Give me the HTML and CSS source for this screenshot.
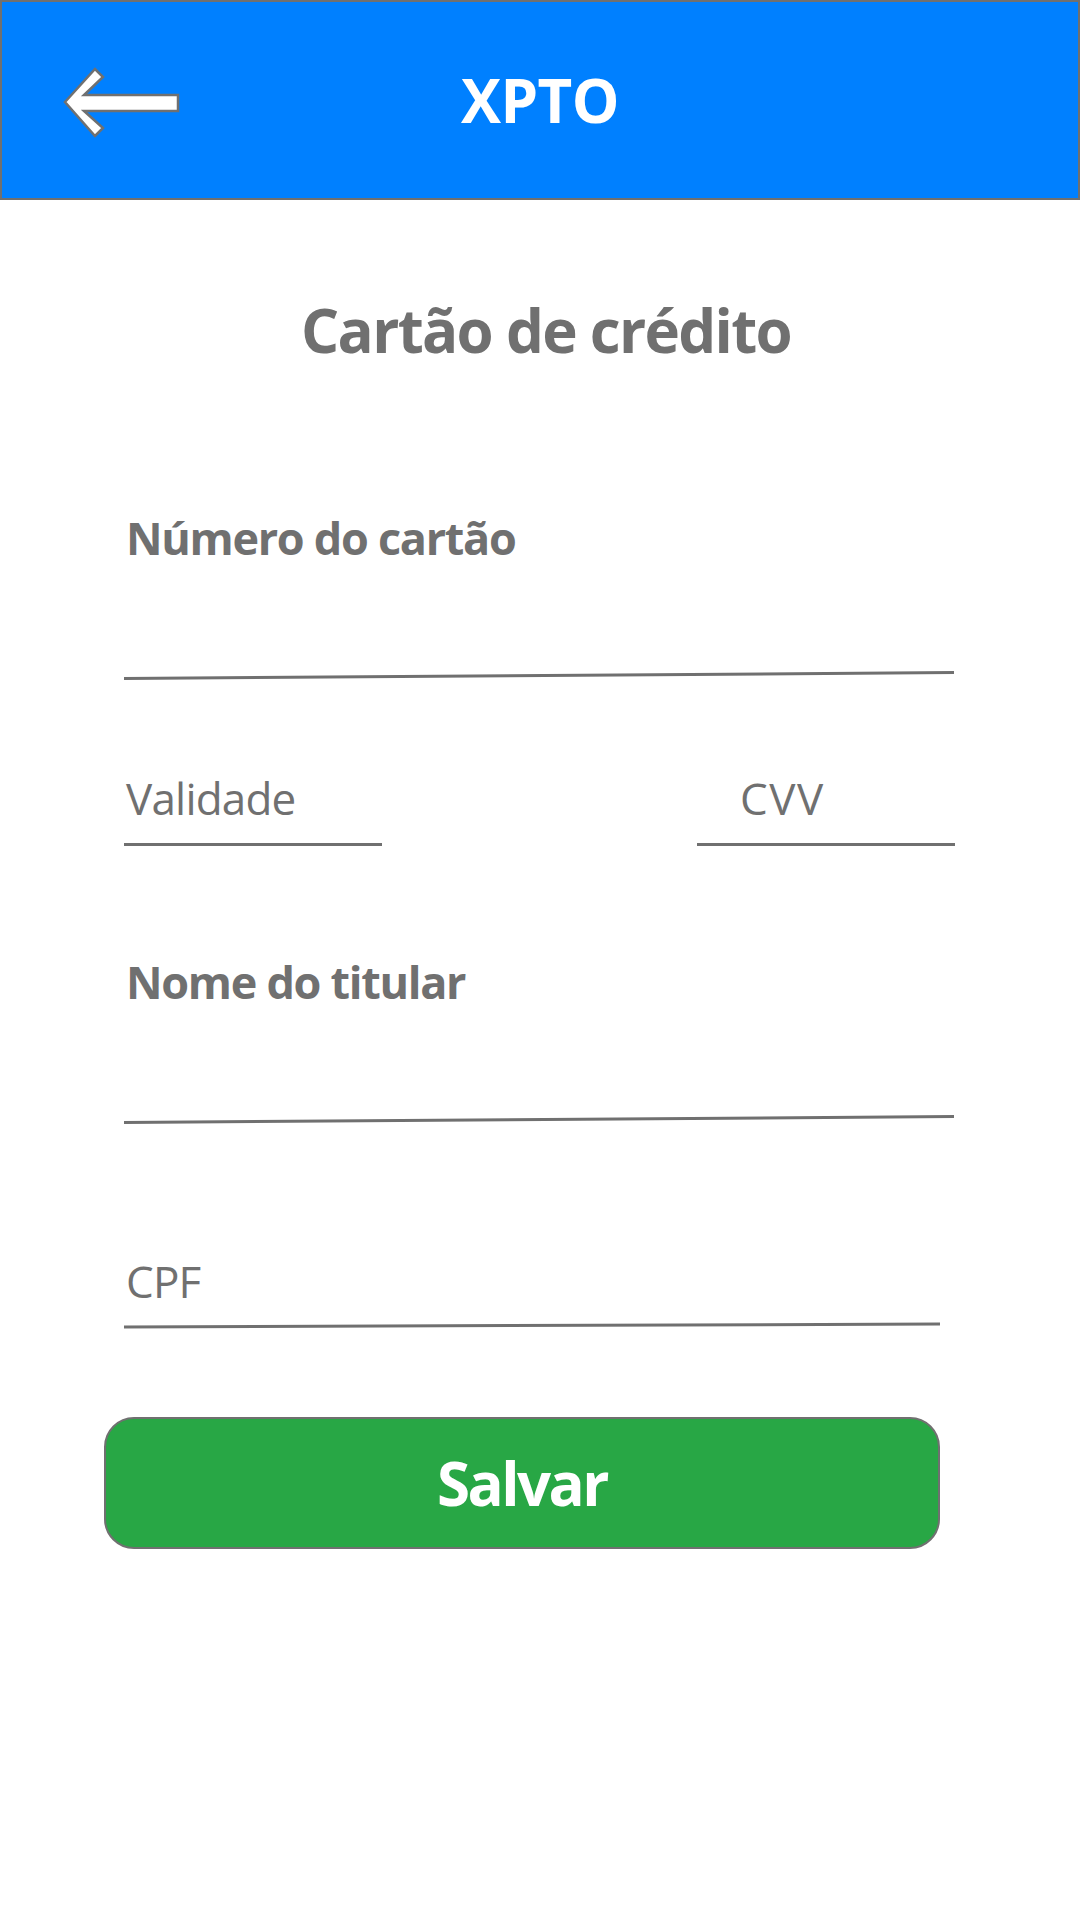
FILE: index.html
```html
<!DOCTYPE html>
<html lang="pt-BR">
<head>
<meta charset="utf-8">
<title>XPTO - Cartão de crédito</title>
<link rel="stylesheet" href="styles.css">
</head>
<body>
<header class="appbar">
  <button class="back" aria-label="Voltar">
    <svg width="120" height="80" viewBox="60 65 125 80" aria-hidden="true">
      <polygon points="65,104 95,71 103,79 84,97 178,97 178,113 84,113 103,130 95,138" fill="#ffffff" stroke="#707070" stroke-width="2.5" stroke-linejoin="miter"/>
    </svg>
  </button>
  <div class="appbar-title">XPTO</div>
</header>
<main class="form">
  <h1 class="title">Cartão de crédito</h1>
  <div class="field">
    <div class="label">Número do cartão</div>
    <div class="underline slant"></div>
  </div>
  <div class="row">
    <div class="small-field">
      <div class="placeholder">Validade</div>
      <div class="underline short"></div>
    </div>
    <div class="small-field">
      <div class="placeholder cvv">CVV</div>
      <div class="underline short"></div>
    </div>
  </div>
  <div class="field name-field">
    <div class="label">Nome do titular</div>
    <div class="underline slant"></div>
  </div>
  <div class="field cpf-field">
    <div class="placeholder">CPF</div>
    <div class="underline cpf-line"></div>
  </div>
  <button class="save">Salvar</button>
</main>
</body>
</html>
```

FILE: styles.css
```css
* { box-sizing: border-box; }
html, body { margin: 0; padding: 0; background: #ffffff; }
body {
  width: 1080px;
  height: 1920px;
  font-family: "Open Sans", "Noto Sans", "DejaVu Sans", sans-serif;
  color: #707070;
}
.appbar {
  position: relative;
  height: 200px;
  background: #0080ff;
  border: 2px solid #707070;
  display: flex;
  align-items: center;
  justify-content: center;
}
.back {
  position: absolute;
  left: 58px;
  top: 61px;
  width: 125px;
  height: 80px;
  padding: 0;
  border: 0;
  background: transparent;
}
.back svg { display: block; width: 125px; height: 80px; }
.appbar-title {
  color: #ffffff;
  font-weight: 700;
  font-size: 60px;
  line-height: 60px;
  letter-spacing: -0.5px;
}
.form {
  padding: 0 124px;
  display: flex;
  flex-direction: column;
}
.title {
  margin: 100px 0 0;
  text-align: center;
  font-weight: 700;
  font-size: 60px;
  line-height: 60px;
  letter-spacing: -1.7px;
  padding-left: 12px;
}
.field { display: flex; flex-direction: column; }
.label {
  margin-top: 155px;
  padding-left: 2px;
  font-weight: 700;
  font-size: 45px;
  line-height: 45px;
  letter-spacing: -1.3px;
}
.underline {
  height: 3px;
  background: #707070;
}
.slant {
  margin-top: 114px;
  width: 830px;
  transform: rotate(-0.41deg);
}
.row {
  display: flex;
  justify-content: space-between;
  width: 831px;
  margin-top: 99px;
}
.small-field { width: 258px; display: flex; flex-direction: column; }
.placeholder {
  padding-left: 2px;
  font-weight: 400;
  font-size: 44px;
  line-height: 44px;
  letter-spacing: -0.8px;
}
.placeholder.cvv { padding-left: 43px; letter-spacing: 1.5px; }
.short { margin-top: 23px; }
.name-field .label { margin-top: 113px; }
.cpf-field { margin-top: 138px; }
.cpf-line {
  margin-top: 21px;
  width: 816px;
  transform: rotate(-0.21deg);
}
.save {
  margin: 90px 0 0 -20px;
  width: 836px;
  height: 132px;
  background: #28a745;
  border: 2px solid #707070;
  border-radius: 30px;
  color: #ffffff;
  font-family: "Open Sans", "Noto Sans", "DejaVu Sans", sans-serif;
  font-weight: 700;
  font-size: 60px;
  line-height: 60px;
  letter-spacing: -2.5px;
  padding: 0;
}
```
